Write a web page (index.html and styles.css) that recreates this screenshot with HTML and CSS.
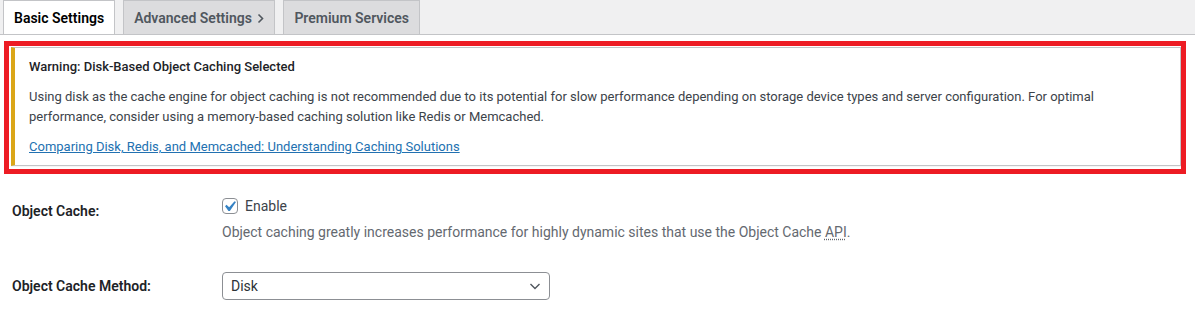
FILE: index.html
```html
<!DOCTYPE html>
<html lang="en">
<head>
<meta charset="utf-8">
<title>Object Cache Settings</title>
<link rel="stylesheet" href="styles.css">
</head>
<body>
<nav class="tabs">
  <a class="tab tab-active" href="#">Basic Settings</a>
  <a class="tab" href="#">Advanced Settings <svg class="tab-chev" width="7" height="11" viewBox="0 0 7 11"><path d="M1.5 1.5l4 4-4 4" fill="none" stroke="#50575e" stroke-width="1.6"/></svg></a>
  <a class="tab" href="#">Premium Services</a>
</nav>

<div class="highlight">
  <div class="notice">
    <p class="notice-title">Warning: Disk-Based Object Caching Selected</p>
    <p class="notice-text">Using disk as the cache engine for object caching is not recommended due to its potential for slow performance depending on storage device types and server configuration. For optimal performance, consider using a memory-based caching solution like Redis or Memcached.</p>
    <p class="notice-link"><a href="#">Comparing Disk, Redis, and Memcached: Understanding Caching Solutions</a></p>
  </div>
</div>

<div class="form">
  <div class="form-label form-label-first">Object Cache:</div>
  <div class="form-field form-field-first">
    <label class="check-row"><input type="checkbox" class="checkbox" checked> <span>Enable</span></label>
    <p class="description">Object caching greatly increases performance for highly dynamic sites that use the Object Cache <abbr title="Application Programming Interface">API</abbr>.</p>
  </div>
  <div class="form-label">Object Cache Method:</div>
  <div class="form-field">
    <select class="select">
      <option>Disk</option>
      <option>Redis</option>
      <option>Memcached</option>
    </select>
  </div>
</div>
</body>
</html>
```

FILE: styles.css
```css
html, body {
  margin: 0;
  padding: 0;
  background: #fff;
}
body {
  font-family: Roboto, "Liberation Sans", sans-serif;
  font-size: 13px;
  color: #3c434a;
}

.tabs {
  display: flex;
  gap: 8px;
  padding-left: 3px;
  background: #f0f0f1;
  border-bottom: 1px solid #c3c4c7;
  height: 34px;
}
.tab {
  display: flex;
  align-items: center;
  box-sizing: border-box;
  height: 34px;
  padding: 1px 10px 0;
  border: 1px solid #c3c4c7;
  border-bottom: none;
  background: #dcdcde;
  color: #50575e;
  font-size: 14px;
  font-weight: 600;
  text-decoration: none;
  white-space: pre;
}
.tab-active {
  background: #fff;
  color: #000;
}
.tab-chev {
  margin-left: 2px;
  margin-top: 1px;
}

.highlight {
  margin: 6px 9px 0 4px;
  border: 5px solid #ed1c24;
  padding: 1px 0 3px 2px;
}
.notice {
  background: #fff;
  border: 1px solid #c3c4c7;
  border-left: 4px solid #dba617;
  box-shadow: 0 1px 1px rgba(0, 0, 0, 0.04);
  padding: 1px 12px;
}
.notice p {
  margin: 6px 0;
  padding: 2px;
  line-height: 20px;
}
.notice .notice-link {
  margin-bottom: 5px;
}
.notice-title {
  font-weight: 500;
  color: #1d2327;
}
.notice-text {
  max-width: 1070px;
}
.notice a {
  color: #2271b1;
  text-decoration: underline;
}

.form {
  display: grid;
  grid-template-columns: 200px 1fr;
  column-gap: 10px;
  margin: 8px 0 0 12px;
  font-size: 14px;
  line-height: 18px;
}
.form-label {
  padding-top: 20px;
  font-weight: 600;
  color: #1d2327;
}
.form-field {
  padding-top: 15px;
}
.form-field-first {
  padding-bottom: 16px;
}
.check-row {
  display: flex;
  align-items: center;
  gap: 7px;
  height: 18px;
  color: #3c434a;
}
.checkbox {
  appearance: none;
  -webkit-appearance: none;
  box-sizing: border-box;
  width: 16px;
  height: 16px;
  margin: 0;
  border: 1px solid #8c8f94;
  border-radius: 4px;
  background: #fff url("data:image/svg+xml;charset=utf-8,%3Csvg xmlns='http://www.w3.org/2000/svg' viewBox='0 0 20 20'%3E%3Cpath d='M14.83 4.89l1.34.94-5.81 8.38H9.02L5.78 9.67l1.34-1.25 2.57 2.4z' fill='%233582c4'/%3E%3C/svg%3E") no-repeat -4px -3px / 21px 21px;
}
.description {
  margin: 8px 0 0;
  color: #646970;
}
abbr {
  text-decoration: underline dotted;
  text-underline-offset: 2px;
}
.select {
  appearance: none;
  -webkit-appearance: none;
  box-sizing: border-box;
  width: 328px;
  height: 28px;
  margin: 0;
  padding: 0 24px 0 8px;
  border: 1px solid #8c8f94;
  border-radius: 4px;
  font-family: inherit;
  font-size: 14px;
  color: #2c3338;
  background: #fff url("data:image/svg+xml;charset=utf-8,%3Csvg xmlns='http://www.w3.org/2000/svg' viewBox='0 0 16 16'%3E%3Cpath d='M3.5 6l4.5 4.5L12.5 6' fill='none' stroke='%2350575e' stroke-width='1.4'/%3E%3C/svg%3E") no-repeat right 6px center / 16px 16px;
}
```
